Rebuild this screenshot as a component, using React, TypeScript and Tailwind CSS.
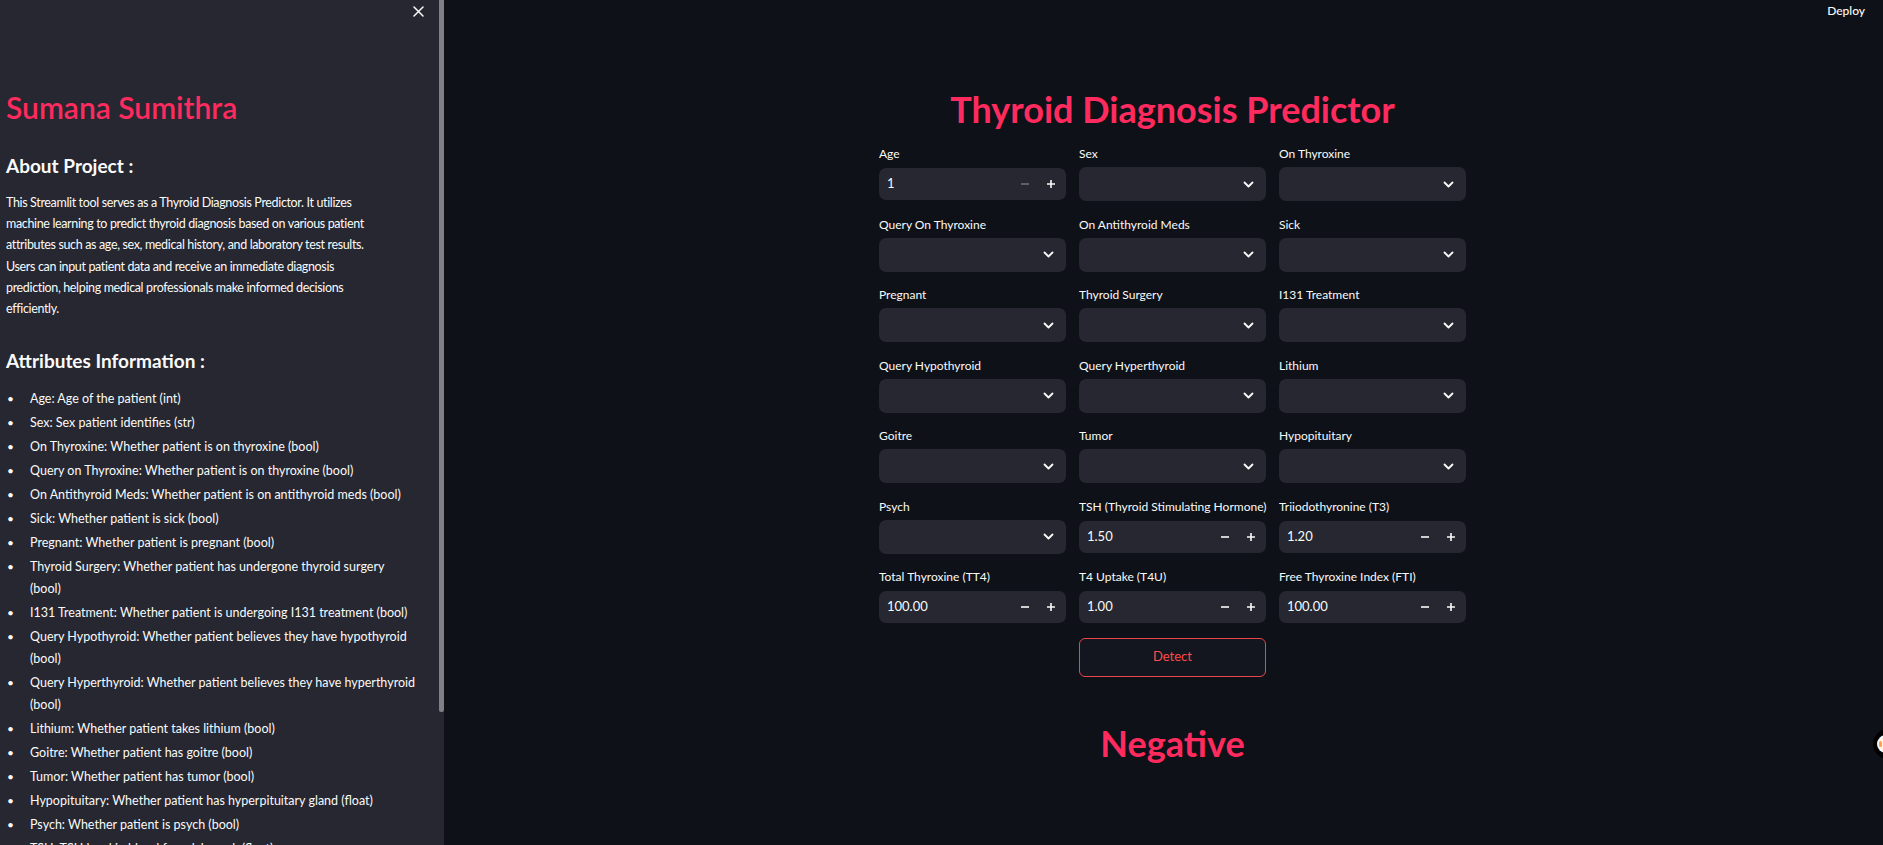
import React from "react";

const ff = "font-['Lato',sans-serif]";

const attrs: string[][] = [
  ["Age: Age of the patient (int)"],
  ["Sex: Sex patient identifies (str)"],
  ["On Thyroxine: Whether patient is on thyroxine (bool)"],
  ["Query on Thyroxine: Whether patient is on thyroxine (bool)"],
  ["On Antithyroid Meds: Whether patient is on antithyroid meds (bool)"],
  ["Sick: Whether patient is sick (bool)"],
  ["Pregnant: Whether patient is pregnant (bool)"],
  ["Thyroid Surgery: Whether patient has undergone thyroid surgery", "(bool)"],
  ["I131 Treatment: Whether patient is undergoing I131 treatment (bool)"],
  ["Query Hypothyroid: Whether patient believes they have hypothyroid", "(bool)"],
  ["Query Hyperthyroid: Whether patient believes they have hyperthyroid", "(bool)"],
  ["Lithium: Whether patient takes lithium (bool)"],
  ["Goitre: Whether patient has goitre (bool)"],
  ["Tumor: Whether patient has tumor (bool)"],
  ["Hypopituitary: Whether patient has hyperpituitary gland (float)"],
  ["Psych: Whether patient is psych (bool)"],
  ["TSH: TSH level in blood from lab work (float)"],
  ["T3: T3 level in blood from lab work (float)"],
  ["TT4: TT4 level in blood from lab work (float)"],
];

type Field = { label: string; kind: "num" | "sel"; value?: string; minDisabled?: boolean };

const fields: Field[] = [
  { label: "Age", kind: "num", value: "1", minDisabled: true },
  { label: "Sex", kind: "sel" },
  { label: "On Thyroxine", kind: "sel" },
  { label: "Query On Thyroxine", kind: "sel" },
  { label: "On Antithyroid Meds", kind: "sel" },
  { label: "Sick", kind: "sel" },
  { label: "Pregnant", kind: "sel" },
  { label: "Thyroid Surgery", kind: "sel" },
  { label: "I131 Treatment", kind: "sel" },
  { label: "Query Hypothyroid", kind: "sel" },
  { label: "Query Hyperthyroid", kind: "sel" },
  { label: "Lithium", kind: "sel" },
  { label: "Goitre", kind: "sel" },
  { label: "Tumor", kind: "sel" },
  { label: "Hypopituitary", kind: "sel" },
  { label: "Psych", kind: "sel" },
  { label: "TSH (Thyroid Stimulating Hormone)", kind: "num", value: "1.50" },
  { label: "Triiodothyronine (T3)", kind: "num", value: "1.20" },
  { label: "Total Thyroxine (TT4)", kind: "num", value: "100.00" },
  { label: "T4 Uptake (T4U)", kind: "num", value: "1.00" },
  { label: "Free Thyroxine Index (FTI)", kind: "num", value: "100.00" },
];

function Chevron() {
  return (
    <svg width="11" height="7" viewBox="0 0 11 7" fill="none">
      <path d="M1.5 1.5 L5.5 5.5 L9.5 1.5" stroke="#fafafa" strokeWidth="1.8" strokeLinecap="round" strokeLinejoin="round" />
    </svg>
  );
}

function Minus({ dim }: { dim?: boolean }) {
  return (
    <svg width="10" height="10" viewBox="0 0 10 10">
      <path d="M1 5 H9" stroke={dim ? "#6c6d78" : "#fafafa"} strokeWidth="1.6" />
    </svg>
  );
}

function Plus() {
  return (
    <svg width="10" height="10" viewBox="0 0 10 10">
      <path d="M1 5 H9 M5 1 V9" stroke="#fafafa" strokeWidth="1.6" />
    </svg>
  );
}

function Cell({ f }: { f: Field }) {
  return (
    <div className="flex flex-col">
      <div className="h-[16px] text-[12px] leading-[16px] text-[#fafafa] whitespace-nowrap">{f.label}</div>
      <div className="mt-[5px] h-[34px]">
        {f.kind === "sel" ? (
          <div className="h-[34px] rounded-[7px] bg-[#262730] flex items-center justify-end pr-[12px]">
            <Chevron />
          </div>
        ) : (
          <div className="mt-[1px] h-[32px] rounded-[7px] bg-[#262730] flex items-center">
            <div className="flex-1 pl-[8px] text-[13px] text-[#fafafa]">{f.value}</div>
            <div className="w-[26px] h-full flex items-center justify-center">
              <Minus dim={f.minDisabled} />
            </div>
            <div className="w-[26px] h-full flex items-center justify-center mr-[2px]">
              <Plus />
            </div>
          </div>
        )}
      </div>
    </div>
  );
}

export default function App() {
  return (
    <div className={`${ff} relative w-[1883px] h-[845px] overflow-hidden flex bg-[#0e1117] text-[#fafafa]`}>
      {/* Sidebar */}
      <aside className="w-[444px] h-full flex shrink-0">
        <div className="w-[439px] h-full bg-[#262730] flex flex-col pl-[6px] overflow-hidden">
          <div className="shrink-0 h-[22px] flex items-center justify-end pr-[15px]">
            <svg width="11" height="11" viewBox="0 0 11 11">
              <path d="M1 1 L10 10 M10 1 L1 10" stroke="#fafafa" strokeWidth="1.5" strokeLinecap="round" />
            </svg>
          </div>
          <h1 className="shrink-0 mt-[67px] h-[36px] text-[30px] leading-[36px] font-semibold text-[#ff2b5f] whitespace-nowrap">
            Sumana Sumithra
          </h1>
          <h3 className="shrink-0 mt-[27px] h-[28px] text-[19px] leading-[28px] font-bold whitespace-nowrap">
            About Project :
          </h3>
          <p className="shrink-0 mt-[12px] text-[12.5px] leading-[21.2px] tracking-[-0.35px] text-[#fafafa] whitespace-nowrap">
            This Streamlit tool serves as a Thyroid Diagnosis Predictor. It utilizes
            <br />
            machine learning to predict thyroid diagnosis based on various patient
            <br />
            attributes such as age, sex, medical history, and laboratory test results.
            <br />
            Users can input patient data and receive an immediate diagnosis
            <br />
            prediction, helping medical professionals make informed decisions
            <br />
            efficiently.
          </p>
          <h3 className="shrink-0 mt-[28px] h-[28px] text-[19px] leading-[28px] font-bold whitespace-nowrap">
            Attributes Information :
          </h3>
          <ul className="shrink-0 mt-[13px] flex flex-col">
            {attrs.map((a, i) => (
              <li key={i} className="shrink-0 flex mb-[2px] text-[12.5px] leading-[22px] whitespace-nowrap">
                <span className="w-[24px] pl-[1px] text-[12px]">•</span>
                <span>
                  {a.map((line, j) => (
                    <span key={j} className="block">
                      {line}
                    </span>
                  ))}
                </span>
              </li>
            ))}
          </ul>
        </div>
        <div className="w-[5px] h-full bg-[#262730]">
          <div className="w-[5px] h-[712px] bg-[#7f7f86] rounded-b-[2px]" />
        </div>
      </aside>

      {/* Main */}
      <main className="flex-1 h-full flex flex-col">
        <div className="shrink-0 h-[21px] flex items-center justify-end pr-[18px]">
          <span className="text-[12px] font-medium text-[#fafafa]">Deploy</span>
        </div>
        <div className="shrink-0 ml-[435px] w-[587px] flex flex-col">
          <h1 className="mt-[66px] h-[44px] text-center text-[36px] leading-[44px] font-bold text-[#ff2b5f] whitespace-nowrap">
            Thyroid Diagnosis Predictor
          </h1>
          <div className="mt-[15px] grid grid-cols-3 gap-x-[13px] gap-y-[15.5px]">
            {fields.map((f) => (
              <Cell key={f.label} f={f} />
            ))}
            <div />
            <button className="-mt-[2px] h-[39px] rounded-[6px] border border-[#e8474a] bg-[#13161e] text-[13px] text-[#ff4b4b]">
              Detect
            </button>
            <div />
          </div>
          <div className="mt-[44px] h-[44px] text-center text-[36px] leading-[44px] font-bold text-[#ff2b5f]">
            Negative
          </div>
        </div>
      </main>

      {/* manage app button partially off-screen */}
      <div className="absolute left-[1873px] top-[729px] w-[30px] h-[30px] rounded-full bg-black flex items-center pl-[4px]">
        <div className="w-[18px] h-[18px] rounded-full bg-[#fdf6ee] flex items-center pl-[2px]">
          <div className="w-[3px] h-[6px] rounded-full bg-[#f7a35c]" />
        </div>
      </div>
    </div>
  );
}
